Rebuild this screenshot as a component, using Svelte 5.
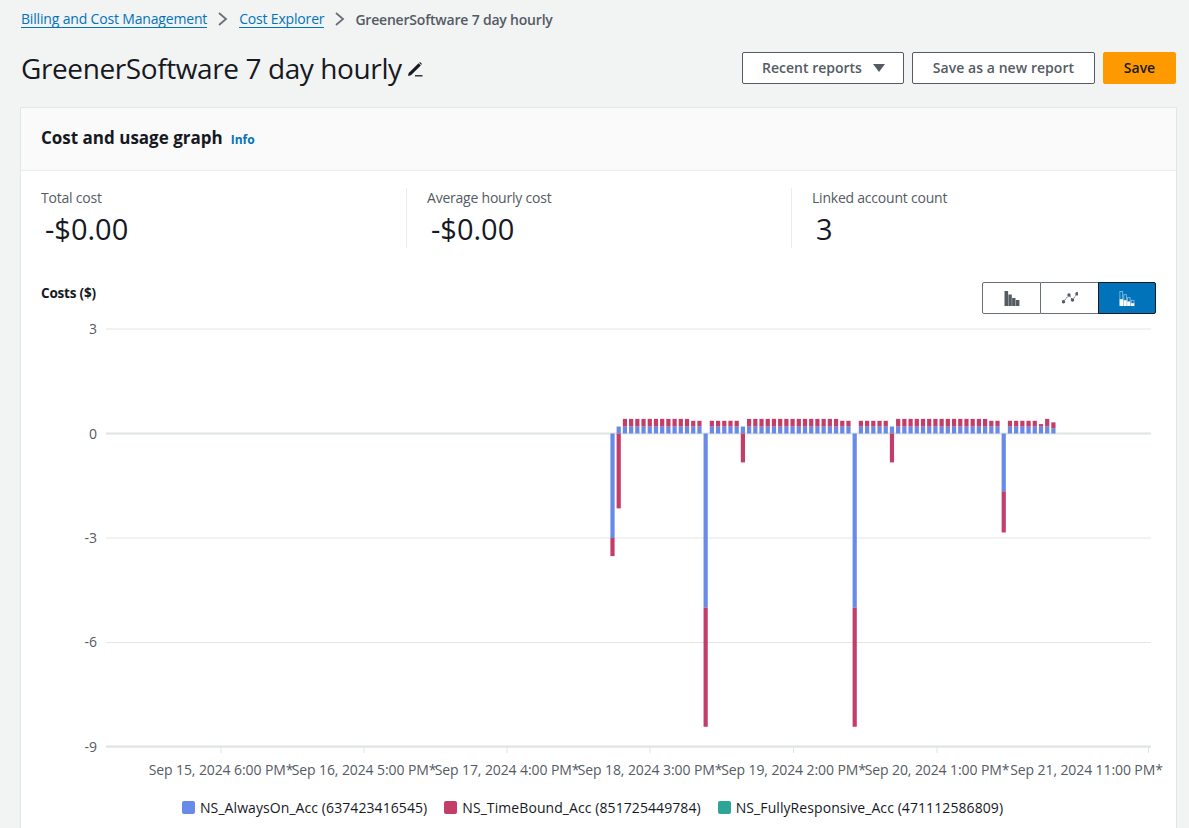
<script>
	// y scale: 0 sits at 433.5, one unit = 34.83px
	const zeroY = 433.5;
	const unit = 34.83;
	const firstX = 612.5;
	const step = 6.21;

	const gridValues = [3, 0, -3, -6, -9];
	const dateTicks = [
		{ x: 221, label: 'Sep 15, 2024 6:00 PM*' },
		{ x: 364, label: 'Sep 16, 2024 5:00 PM*' },
		{ x: 507, label: 'Sep 17, 2024 4:00 PM*' },
		{ x: 650, label: 'Sep 18, 2024 3:00 PM*' },
		{ x: 793.5, label: 'Sep 19, 2024 2:00 PM*' },
		{ x: 937, label: 'Sep 20, 2024 1:00 PM*' },
		{ x: 1086.5, label: 'Sep 21, 2024 11:00 PM*' }
	];

	const short = [13, 14, 16, 17, 18, 19, 20, 37, 38, 40, 41, 42, 43, 44, 61, 62, 64, 65, 66, 67, 68];
	const negative = {
		0: { blue: -3.0, red: -0.52 },
		1: { blue: 0.2, redBelow: -2.15 },
		15: { blue: -5, red: -3.42 },
		21: { blue: 0.2, redBelow: -0.83 },
		39: { blue: -5, red: -3.42 },
		45: { blue: 0.2, redBelow: -0.83 },
		63: { blue: -1.66, red: -1.18 }
	};

	function heightOf(i) {
		if (i === 69) return 0.07;
		if (i === 70) return 0.22;
		if (i === 71) return 0.17;
		return short.includes(i) ? 0.165 : 0.22;
	}

	const bars = [];
	for (let i = 0; i < 72; i++) {
		const x = firstX + i * step - 2.1;
		const n = negative[i];
		if (n && n.red) {
			const blueH = -n.blue * unit;
			const redH = -n.red * unit;
			bars.push({ x, y: zeroY, h: blueH, c: 'blue' });
			bars.push({ x, y: zeroY + blueH, h: redH, c: 'red' });
		} else if (n) {
			bars.push({ x, y: zeroY - n.blue * unit, h: n.blue * unit, c: 'blue' });
			bars.push({ x, y: zeroY, h: -n.redBelow * unit, c: 'red' });
		} else {
			const blueH = i === 71 ? 0.15 * unit : 0.2 * unit;
			const redH = heightOf(i) * unit;
			bars.push({ x, y: zeroY - blueH, h: blueH, c: 'blue' });
			bars.push({ x, y: zeroY - blueH - redH, h: redH, c: 'red' });
		}
	}

	const legend = [
		{ name: 'NS_AlwaysOn_Acc (637423416545)', color: '#688ae8' },
		{ name: 'NS_TimeBound_Acc (851725449784)', color: '#c33d69' },
		{ name: 'NS_FullyResponsive_Acc (471112586809)', color: '#2ea597' }
	];
</script>

<div class="page">
	<nav class="crumbs">
		<a href="#billing">Billing and Cost Management</a>
		<svg class="chev" viewBox="0 0 12 16" width="12" height="16"><path d="M2 2l7 6-7 6" /></svg>
		<a href="#explorer">Cost Explorer</a>
		<svg class="chev" viewBox="0 0 12 16" width="12" height="16"><path d="M2 2l7 6-7 6" /></svg>
		<span class="current">GreenerSoftware 7 day hourly</span>
	</nav>

	<header class="head">
		<div class="title">
			<h1>GreenerSoftware 7 day hourly</h1>
			<svg class="pencil" viewBox="0 0 16 16" width="16" height="16">
				<path d="M1 15l.7-3L11.6 2.2l2.2 2.2L3.9 14.3z" />
				<path class="tip" d="M12.6 1.4l2 2" />
				<path class="line" d="M8 14.8h7.5" />
			</svg>
		</div>
		<div class="actions">
			<button class="btn recent">Recent reports <span class="caret"></span></button>
			<button class="btn new">Save as a new report</button>
			<button class="btn primary">Save</button>
		</div>
	</header>

	<section class="card">
		<div class="card-head">
			<h2>Cost and usage graph</h2>
			<a class="info" href="#info">Info</a>
		</div>

		<div class="stats">
			<div class="stat">
				<div class="stat-label">Total cost</div>
				<div class="stat-value">-$0.00</div>
			</div>
			<div class="stat">
				<div class="stat-label">Average hourly cost</div>
				<div class="stat-value">-$0.00</div>
			</div>
			<div class="stat">
				<div class="stat-label">Linked account count</div>
				<div class="stat-value">3</div>
			</div>
		</div>

		<div class="chart-top">
			<span class="axis-title">Costs ($)</span>
			<div class="toggle">
				<button class="seg" aria-label="Bar chart">
					<svg viewBox="0 0 16 15" width="16" height="15" fill="#545b64">
						<rect x="0.5" y="0" width="3.6" height="15" />
						<rect x="4.4" y="3.5" width="3.4" height="11.5" />
						<rect x="8.1" y="7" width="3.4" height="8" />
						<rect x="11.8" y="9" width="3.6" height="6" />
					</svg>
				</button>
				<button class="seg" aria-label="Line chart">
					<svg viewBox="0 0 16 14" width="16" height="14">
						<path d="M1.5 10.7L7 4l3.5 5L15 2.7" fill="none" stroke="#545b64" stroke-width="1" stroke-dasharray="1.5 1" />
						<circle cx="1.5" cy="10.7" r="1.7" fill="#545b64" />
						<circle cx="7" cy="4" r="1.7" fill="#545b64" />
						<circle cx="10.5" cy="9" r="1.7" fill="#545b64" />
						<circle cx="15" cy="2.7" r="1.7" fill="#545b64" />
					</svg>
				</button>
				<button class="seg active" aria-label="Stacked bar chart">
					<svg viewBox="0 0 16 15" width="16" height="15" fill="#fff">
						<rect x="0.9" y="0.4" width="2.8" height="8" fill="none" stroke="#8fc0e6" stroke-width="0.8" />
						<rect x="0.5" y="8.3" width="3.6" height="6.7" />
						<rect x="4.8" y="3.7" width="2.6" height="5.6" fill="none" stroke="#8fc0e6" stroke-width="0.8" />
						<rect x="4.4" y="9.3" width="3.4" height="5.7" />
						<rect x="8.5" y="6.7" width="2.6" height="4" fill="none" stroke="#8fc0e6" stroke-width="0.8" />
						<rect x="8.1" y="10.7" width="3.4" height="4.3" />
						<rect x="12.2" y="9.3" width="2.8" height="3" fill="none" stroke="#8fc0e6" stroke-width="0.8" />
						<rect x="11.8" y="12.3" width="3.6" height="2.7" />
					</svg>
				</button>
			</div>
		</div>

		<!-- viewBox uses page coordinates so the bar numbers read the same as the screenshot -->
		<svg class="plot" viewBox="21 318 1155 472" width="1155" height="472">
			{#each gridValues as v}
				<line class="grid" x1="106" x2="1151" y1={zeroY - v * unit} y2={zeroY - v * unit} />
				<text class="tick" x="97" y={zeroY - v * unit + 5} text-anchor="end">{v}</text>
			{/each}
			<line class="zero" x1="106" x2="1151" y1={zeroY} y2={zeroY} />
			<line class="zero" x1="106" x2="1151" y1="746.5" y2="746.5" />
			{#each dateTicks as t, i}
				{#if i < 6}
					<line class="zero thin" x1={t.x} x2={t.x} y1="747" y2="753" />
				{/if}
			{/each}
			<line class="zero thin" x1="1148.5" x2="1148.5" y1="747" y2="753" />
			{#each dateTicks as t}
				<text class="tick date" x={t.x} y="775" text-anchor="middle">{t.label}</text>
			{/each}
			{#each bars as b}
				<rect class={b.c} x={b.x} y={b.y} width="4.2" height={b.h} />
			{/each}
		</svg>

		<div class="legend">
			{#each legend as item}
				<div class="legend-item">
					<span class="swatch" style="background: {item.color}"></span>
					{item.name}
				</div>
			{/each}
		</div>
	</section>
</div>

<style>
	:global(body) {
		margin: 0;
		background: #f2f3f3;
		overflow: hidden;
	}

	.page {
		height: 828px;
		padding: 0 13px 0 21px;
		overflow: hidden;
		font-family: 'Open Sans', 'Noto Sans', sans-serif;
		color: #16191f;
	}

	.crumbs {
		display: flex;
		align-items: center;
		height: 38px;
		font-size: 14px;
		letter-spacing: -0.17px;
	}

	.crumbs a {
		color: #0073bb;
		text-decoration: none;
		border-bottom: 1px solid #0073bb;
		line-height: 17px;
	}

	.chev {
		margin: 0 10px 0 10px;
		fill: none;
		stroke: #687078;
		stroke-width: 1.8;
	}

	.current {
		color: #545b64;
		font-weight: 600;
		font-size: 14px;
		letter-spacing: -0.2px;
		margin-left: -1px;
	}

	.head {
		display: flex;
		justify-content: space-between;
		align-items: center;
		height: 60px;
	}

	.title {
		display: flex;
		align-items: center;
		gap: 5px;
	}

	h1 {
		margin: 0;
		font-size: 28px;
		font-weight: 400;
		letter-spacing: -0.4px;
	}

	.pencil {
		margin-top: 2px;
		fill: #16191f;
	}

	.pencil .tip {
		fill: none;
		stroke: #16191f;
		stroke-width: 1.2;
	}

	.pencil .line {
		fill: none;
		stroke: #16191f;
		stroke-width: 1.3;
	}

	.actions {
		display: flex;
		gap: 8px;
	}

	.btn {
		height: 32px;
		box-sizing: border-box;
		border: 1px solid #545b64;
		border-radius: 2px;
		background: #fff;
		color: #545b64;
		font: 600 14px 'Open Sans', 'Noto Sans', sans-serif;
		padding: 0 0 2px;
		display: flex;
		align-items: center;
		justify-content: center;
	}

	.recent {
		width: 162px;
		gap: 11px;
		padding-left: 1px;
	}

	.new {
		width: 183px;
		letter-spacing: 0.05px;
	}

	.primary {
		width: 73px;
		background: #ff9900;
		border-color: #ff9900;
		color: #16191f;
	}

	.caret {
		width: 0;
		height: 0;
		margin-top: 2px;
		border-left: 6px solid transparent;
		border-right: 6px solid transparent;
		border-top: 8px solid #545b64;
	}

	.card {
		background: #fff;
		height: 720px;
		box-sizing: border-box;
		margin-top: 10px;
		box-shadow: 0 0 0 1px #e3e6e6;
	}

	.card-head {
		display: flex;
		align-items: baseline;
		gap: 8px;
		height: 63px;
		box-sizing: border-box;
		padding: 18px 20px 0;
		background: #fafafa;
		border-bottom: 1px solid #eaeded;
	}

	h2 {
		margin: 0;
		font-size: 17px;
		font-weight: 700;
		letter-spacing: 0;
	}

	.info {
		color: #0073bb;
		font-size: 12px;
		font-weight: 700;
		text-decoration: none;
	}

	.stats {
		display: grid;
		grid-template-columns: 365px 385px 1fr;
		padding: 17px 0 0 20px;
		height: 60px;
	}

	.stat + .stat {
		border-left: 1px solid #eaeded;
		padding-left: 20px;
	}

	.stat {
		height: 60px;
	}

	.stat-label {
		font-size: 14px;
		line-height: 20px;
		color: #545b64;
		letter-spacing: -0.22px;
	}

	.stat-value {
		font-size: 29px;
		line-height: 41px;
		padding-left: 4px;
	}

	.chart-top {
		display: flex;
		justify-content: space-between;
		padding: 34px 20px 0;
		height: 36px;
	}

	.axis-title {
		font-size: 13.5px;
		font-weight: 700;
		line-height: 22px;
		letter-spacing: -0.2px;
	}

	.toggle {
		display: flex;
		height: 32px;
	}

	.seg {
		width: 58px;
		height: 32px;
		box-sizing: border-box;
		background: #fff;
		border: 1px solid #687078;
		border-left-width: 0;
		padding: 0;
		display: flex;
		align-items: center;
		justify-content: center;
	}

	.seg:first-child {
		width: 59px;
		border-left-width: 1px;
		border-radius: 2px 0 0 2px;
	}

	.seg.active {
		width: 58px;
		margin-left: -1px;
		background: #0073bb;
		border-color: #16191f;
		border-left-width: 1px;
		border-radius: 0 2px 2px 0;
	}

	.plot {
		display: block;
	}

	.grid {
		stroke: #e3e6e6;
		stroke-width: 1;
	}

	.zero {
		stroke: #dfe4e4;
		stroke-width: 2;
	}

	.zero.thin {
		stroke-width: 1;
	}

	.tick {
		font-size: 14px;
		fill: #545b64;
	}

	.date {
		letter-spacing: -0.1px;
	}

	.blue {
		fill: #688ae8;
	}

	.red {
		fill: #c33d69;
	}

	.legend {
		display: flex;
		justify-content: flex-start;
		gap: 17px;
		padding-left: 161px;
		height: 20px;
		align-items: center;
		margin-top: 7px;
		font-size: 14px;
		letter-spacing: 0.08px;
	}

	.legend-item {
		display: flex;
		align-items: center;
		gap: 5px;
	}

	.swatch {
		width: 13px;
		height: 13px;
		border-radius: 2px;
	}
</style>
